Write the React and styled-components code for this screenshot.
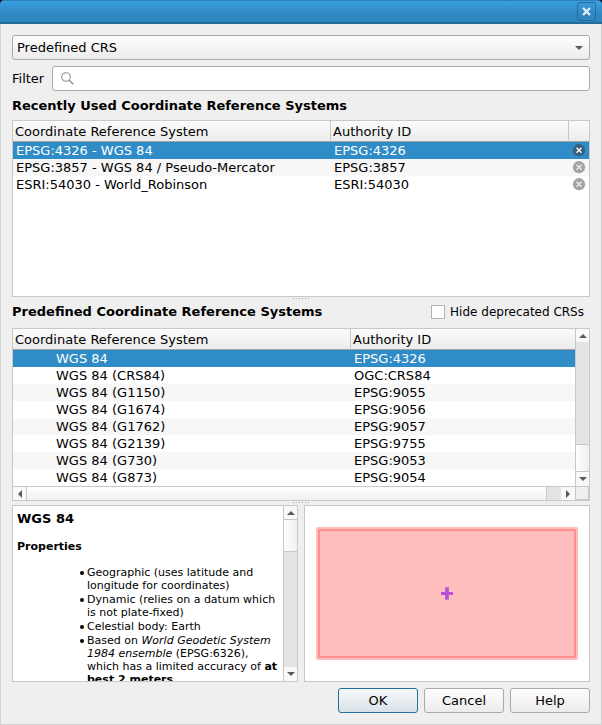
import React, { useState } from 'react';
import styled, { createGlobalStyle } from 'styled-components';

const colors = {
  window: '#efefef',
  highlight: '#308cc6',
  frame: '#c8c8c8',
  control: '#a9a9a9',
  alternate: '#f7f7f7',
  track: '#e4e4e4',
  arrow: '#5a5a5a',
};

const GlobalStyle = createGlobalStyle`
  * {
    box-sizing: border-box;
  }

  body {
    margin: 0;
    background: #000;
    font-family: "DejaVu Sans", sans-serif;
    font-size: 13px;
    color: #000;
  }

  button, input, select {
    font: inherit;
    color: inherit;
  }
`;

const Dialog = styled.main`
  display: flex;
  flex-direction: column;
  min-height: 100vh;
`;

const TitleBar = styled.header`
  display: flex;
  justify-content: flex-end;
  align-items: center;
  height: 24px;
  padding: 0 6px;
  border-top: 1px solid #2d80b8;
  border-bottom: 2px solid #246b98;
  border-radius: 4px 4px 0 0;
  background: linear-gradient(#3aa0e2, #2f88c2 60%, #2f86bf);
`;

const CloseButton = styled.button`
  display: flex;
  align-items: center;
  justify-content: center;
  width: 19px;
  height: 19px;
  padding: 0;
  border: 1px solid #24699a;
  border-radius: 3px;
  background: transparent;
`;

const Body = styled.div`
  flex: 1;
  display: flex;
  flex-direction: column;
  padding: 11px;
  border: 1px solid #d2d2d2;
  border-top: 0;
  background: ${colors.window};
`;

const SelectBox = styled.div`
  display: grid;
  align-items: center;

  select, svg {
    grid-area: 1 / 1;
  }

  select {
    appearance: none;
    height: 25px;
    padding: 0 24px 0 4px;
    border: 1px solid ${colors.control};
    border-radius: 3px;
    background: linear-gradient(#fefefe, #ebebeb);
  }

  svg {
    justify-self: end;
    margin-right: 7px;
    pointer-events: none;
  }
`;

const FilterRow = styled.div`
  display: flex;
  align-items: center;
  gap: 8px;
  margin-top: 6px;
`;

const SearchBox = styled.div`
  flex: 1;
  display: flex;
  align-items: center;
  gap: 6px;
  height: 25px;
  padding: 0 8px;
  border: 1px solid ${colors.control};
  border-radius: 3px;
  background: #fff;

  input {
    flex: 1;
    min-width: 0;
    padding: 0;
    border: 0;
    outline: 0;
    background: transparent;
  }
`;

const Heading = styled.h2`
  margin: 0;
  font-size: 13px;
  line-height: 29px;
`;

const HeadingRow = styled.div`
  display: flex;
  align-items: center;
  justify-content: space-between;
  height: 23px;
  margin-bottom: 5px;
  padding-right: 6px;
`;

const CheckLabel = styled.label`
  display: flex;
  align-items: center;
  gap: 5px;
  font-size: 12px;

  input {
    appearance: none;
    width: 14px;
    height: 14px;
    margin: 0;
    border: 1px solid #b4b4b4;
    background: #fff;
  }

  input:checked {
    background: ${colors.highlight};
  }
`;

const Frame = styled.div`
  flex: ${props => props.$grow} 1 0;
  display: grid;
  grid-template-columns: minmax(0, 1fr) auto;
  grid-template-rows: minmax(0, 1fr) auto;
  min-height: 0;
  min-width: 0;
  border: 1px solid ${colors.frame};
  background: #fff;
`;

const TablePane = styled.div`
  overflow: hidden;
`;

const Table = styled.table`
  width: 100%;
  table-layout: fixed;
  border-spacing: 0;

  th {
    height: 21px;
    padding: 0 2px;
    border-right: 1px solid ${colors.frame};
    border-bottom: 1px solid #a2a2a2;
    background: linear-gradient(#fbfbfb, #ececec);
    font-weight: normal;
    text-align: left;
  }

  th:last-child {
    border-right: 0;
  }

  td {
    height: 17px;
    padding: 0 3px;
    line-height: 17px;
    white-space: nowrap;
  }

  td:first-child {
    padding-left: ${props => props.$indent || 3}px;
  }
`;

const Row = styled.tr`
  background: ${props => props.$selected ? colors.highlight : props.$alternate ? colors.alternate : '#fff'};
  color: ${props => props.$selected ? '#fff' : '#000'};
`;

const RemoveButton = styled.button`
  display: block;
  width: 14px;
  height: 13px;
  padding: 0;
  border: 0;
  background: transparent;

  svg {
    display: block;
  }
`;

const Splitter = styled.div`
  display: flex;
  justify-content: center;
  height: ${props => props.$size}px;
  padding-top: 1px;

  svg {
    display: block;
  }
`;

const Bar = styled.div`
  display: flex;
  flex-direction: ${props => props.$vertical ? 'column' : 'row'};
  ${props => props.$vertical ? 'width: 14px' : 'height: 14px'};
  ${props => props.$vertical ? 'border-left' : 'border-top'}: 1px solid ${colors.frame};
`;

const BarButton = styled.button`
  display: flex;
  align-items: center;
  justify-content: center;
  flex: 0 0 13px;
  padding: 0;
  border: 0;
  background: #f9f9f9;

  &:last-child {
    flex-basis: 14px;
  }
`;

const Track = styled.div`
  flex: ${props => props.$grow} 1 0;
  background: ${colors.track};
`;

const Thumb = styled.div`
  flex: ${props => props.$grow} 1 0;
  border: 0 solid ${colors.frame};
  border-width: ${props => props.$vertical ? '1px 0' : '0 1px'};
  background: linear-gradient(${props => props.$vertical ? 'to right' : 'to bottom'}, #fefefe, #f0f0f0);
`;

const Corner = styled.div`
  border: 1px solid ${colors.frame};
  background: ${colors.window};
`;

const Details = styled.div`
  flex: 178 1 0;
  display: grid;
  grid-template-columns: minmax(0, 1fr) minmax(0, 1fr);
  gap: 6px;
  min-height: 0;
`;

const Description = styled.article`
  height: 0;
  min-height: 100%;
  padding: 4px;
  overflow: hidden;
  font-size: 11px;
  line-height: 13px;

  h1 {
    margin: 0;
    font-size: 13px;
    line-height: 17px;
  }

  h2 {
    margin: 13px 0;
    font-size: 11px;
    line-height: 13px;
  }

  ul {
    margin: 0;
    padding-left: 70px;
    list-style: none;
  }

  li {
    margin-bottom: 1px;
  }

  li::before {
    content: "";
    float: left;
    width: 4px;
    height: 4px;
    margin: 5px 0 0 -7px;
    border-radius: 50%;
    background: #000;
  }
`;

const ExtentMap = styled.div`
  display: flex;
  align-items: center;
  padding: 0 11px;

  svg {
    width: 100%;
  }
`;

const ButtonRow = styled.footer`
  display: flex;
  justify-content: flex-end;
  gap: 6px;
  margin-top: 6px;
`;

const Button = styled.button`
  width: 80px;
  height: 25px;
  padding: 0;
  border: 1px solid ${props => props.$primary ? '#2070a0' : colors.control};
  border-radius: 3px;
  background: ${props => props.$primary ? 'linear-gradient(#f8fafb, #d9e1e7)' : 'linear-gradient(#fefefe, #ebebeb)'};
`;

const arrows = {
  up: 'M0 5 L4 1 L8 5 Z',
  down: 'M0 1 L4 5 L8 1 Z',
  left: 'M5 0 L1 4 L5 8 Z',
  right: 'M1 0 L5 4 L1 8 Z',
};

const Arrow = ({ direction }) => {
  const vertical = direction === 'up' || direction === 'down';
  return (
    <svg width={vertical ? 8 : 6} height={vertical ? 6 : 8} aria-hidden="true">
      <path d={arrows[direction]} fill={colors.arrow} />
    </svg>
  );
};

const ScrollBar = ({ vertical, before = 0, size, after = 0 }) => (
  <Bar $vertical={vertical}>
    <BarButton aria-label={vertical ? 'Scroll up' : 'Scroll left'}>
      <Arrow direction={vertical ? 'up' : 'left'} />
    </BarButton>
    <Track $grow={before} />
    <Thumb $vertical={vertical} $grow={size} />
    <Track $grow={after} />
    <BarButton aria-label={vertical ? 'Scroll down' : 'Scroll right'}>
      <Arrow direction={vertical ? 'down' : 'right'} />
    </BarButton>
  </Bar>
);

const Grip = ({ size }) => (
  <Splitter $size={size}>
    <svg width="17" height="1" aria-hidden="true">
      <path d="M0 .5 H17" stroke="#aaa" strokeDasharray="1 2" />
    </svg>
  </Splitter>
);

const RemoveIcon = ({ selected }) => (
  <svg width="14" height="13" viewBox="0 0 14 13" aria-hidden="true">
    <circle cx="7" cy="6.2" r="6.1" fill={selected ? '#36617f' : '#a3a3a3'} />
    <path d="M4.5 3.7 L9.5 8.7 M9.5 3.7 L4.5 8.7" stroke={selected ? '#fff' : '#ececec'} strokeWidth="1.4" />
  </svg>
);

const recentSystems = [
  { name: 'EPSG:4326 - WGS 84', id: 'EPSG:4326' },
  { name: 'EPSG:3857 - WGS 84 / Pseudo-Mercator', id: 'EPSG:3857' },
  { name: 'ESRI:54030 - World_Robinson', id: 'ESRI:54030' },
];

const predefinedSystems = [
  { name: 'WGS 84', id: 'EPSG:4326' },
  { name: 'WGS 84 (CRS84)', id: 'OGC:CRS84' },
  { name: 'WGS 84 (G1150)', id: 'EPSG:9055' },
  { name: 'WGS 84 (G1674)', id: 'EPSG:9056' },
  { name: 'WGS 84 (G1762)', id: 'EPSG:9057' },
  { name: 'WGS 84 (G2139)', id: 'EPSG:9755' },
  { name: 'WGS 84 (G730)', id: 'EPSG:9053' },
  { name: 'WGS 84 (G873)', id: 'EPSG:9054' },
];

const RecentTable = () => {
  const [selected, setSelected] = useState(0);

  return (
    <TablePane>
      <Table>
        <colgroup>
          <col width="318" />
          <col />
          <col width="20" />
        </colgroup>
        <thead>
          <tr>
            <th>Coordinate Reference System</th>
            <th>Authority ID</th>
            <th></th>
          </tr>
        </thead>
        <tbody>
          {recentSystems.map((crs, i) => (
            <Row key={crs.id} $selected={i === selected} $alternate={i % 2 === 1} onClick={() => setSelected(i)}>
              <td>{crs.name}</td>
              <td>{crs.id}</td>
              <td>
                <RemoveButton aria-label={'Remove ' + crs.id}>
                  <RemoveIcon selected={i === selected} />
                </RemoveButton>
              </td>
            </Row>
          ))}
        </tbody>
      </Table>
    </TablePane>
  );
};

const PredefinedTable = () => {
  const [selected, setSelected] = useState(0);

  return (
    <TablePane>
      <Table $indent={43}>
        <colgroup>
          <col width="338" />
          <col />
        </colgroup>
        <thead>
          <tr>
            <th>Coordinate Reference System</th>
            <th>Authority ID</th>
          </tr>
        </thead>
        <tbody>
          {predefinedSystems.map((crs, i) => (
            <Row key={crs.id} $selected={i === selected} $alternate={i % 2 === 0} onClick={() => setSelected(i)}>
              <td>{crs.name}</td>
              <td>{crs.id}</td>
            </Row>
          ))}
        </tbody>
      </Table>
    </TablePane>
  );
};

const App = () => {
  return (
    <Dialog>
      <GlobalStyle />
      <TitleBar>
        <CloseButton aria-label="Close">
          <svg width="9" height="9" viewBox="0 0 9 9" aria-hidden="true">
            <path d="M1 1 L8 8 M8 1 L1 8" stroke="#e6f2fb" strokeWidth="2.2" />
          </svg>
        </CloseButton>
      </TitleBar>
      <Body>
        <SelectBox>
          <select aria-label="CRS type">
            <option>Predefined CRS</option>
          </select>
          <Arrow direction="down" />
        </SelectBox>
        <FilterRow>
          <label htmlFor="filter">Filter</label>
          <SearchBox>
            <svg width="13" height="13" viewBox="0 0 13 13" fill="none" stroke="#949494" aria-hidden="true">
              <circle cx="5" cy="5" r="4.3" strokeWidth="1.1" />
              <path d="M8.2 8.2 L12.2 12.2" strokeWidth="1.6" />
            </svg>
            <input id="filter" type="text" />
          </SearchBox>
        </FilterRow>

        <Heading>Recently Used Coordinate Reference Systems</Heading>
        <Frame $grow={176}>
          <RecentTable />
        </Frame>

        <Grip size={3} />
        <HeadingRow>
          <Heading>Predefined Coordinate Reference Systems</Heading>
          <CheckLabel>
            <input type="checkbox" />
            Hide deprecated CRSs
          </CheckLabel>
        </HeadingRow>
        <Frame $grow={172}>
          <PredefinedTable />
          <ScrollBar vertical before={102} size={26} />
          <ScrollBar size={518} after={14} />
          <Corner />
        </Frame>

        <Grip size={4} />
        <Details>
          <Frame $grow={1}>
            <Description>
              <h1>WGS 84</h1>
              <h2>Properties</h2>
              <ul>
                <li>Geographic (uses latitude and longitude for coordinates)</li>
                <li>Dynamic (relies on a datum which is not plate-fixed)</li>
                <li>Celestial body: Earth</li>
                <li>
                  Based on <i>World Geodetic System 1984 ensemble</i> (EPSG:6326), which has a limited
                  accuracy of <b>at best 2 meters</b>.
                </li>
              </ul>
            </Description>
            <ScrollBar vertical size={31} after={115} />
          </Frame>
          <Frame $grow={1}>
            <ExtentMap>
              <svg viewBox="0 0 262 133" role="img" aria-label="Extent of WGS 84">
                <rect width="262" height="133" rx="2" fill="#ffbebe" />
                <rect x="3" y="3" width="256" height="127" fill="#ffbebe" stroke="#ff8f8f" strokeWidth="2" />
                <path d="M131 60 V73" stroke="#c878d0" strokeWidth="4" />
                <path d="M125 66.5 H137 M131 61 V72" stroke="#b94fd6" strokeWidth="3" />
              </svg>
            </ExtentMap>
          </Frame>
        </Details>

        <ButtonRow>
          <Button $primary>OK</Button>
          <Button>Cancel</Button>
          <Button>Help</Button>
        </ButtonRow>
      </Body>
    </Dialog>
  );
};

export default App;
